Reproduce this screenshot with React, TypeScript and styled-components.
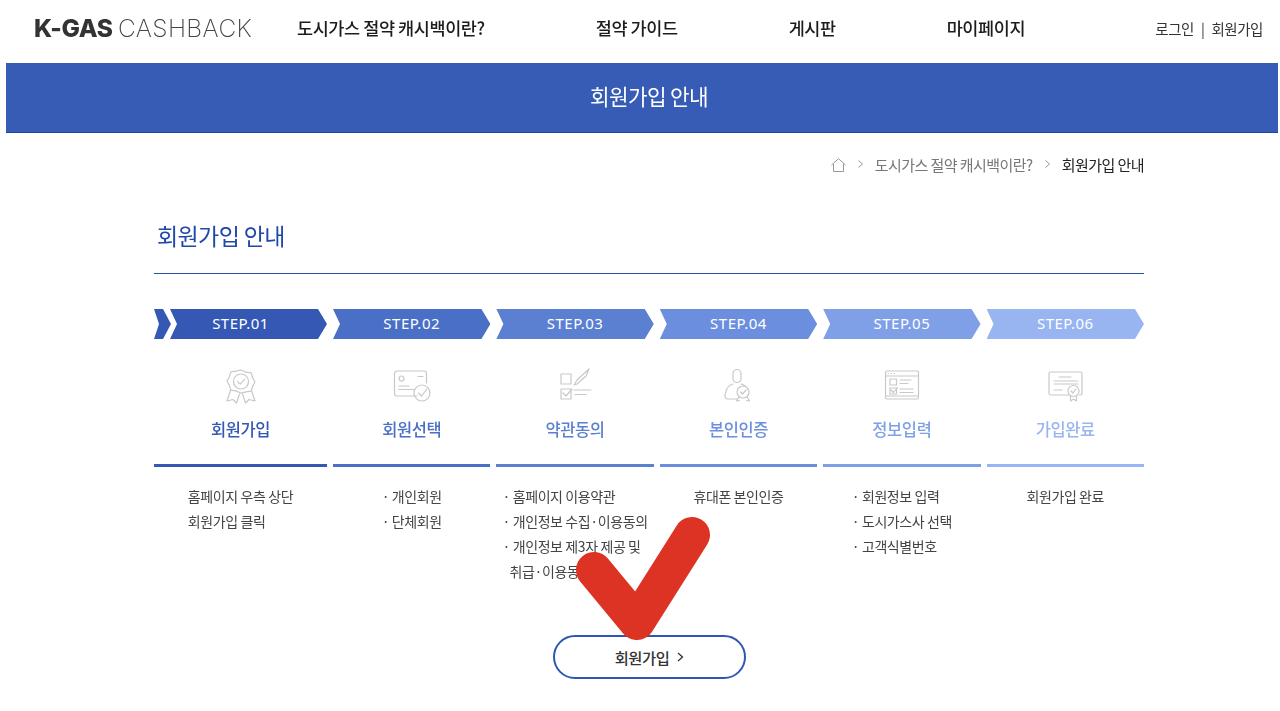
import React from "react";
import styled, { createGlobalStyle } from "styled-components";

const GlobalStyle = createGlobalStyle`
  html, body {
    margin: 0;
    padding: 0;
    background: #fff;
    font-family: "Noto Sans CJK KR", "Noto Sans", sans-serif;
  }
  * { box-sizing: border-box; }
`;

const Page = styled.div`
  position: relative;
  width: 1280px;
  height: 711px;
  overflow: hidden;
  filter: blur(0.3px);
`;

const Header = styled.header`
  display: flex;
  align-items: center;
  height: 63px;
  padding: 0 17px 7px 34px;
`;

const Logo = styled.div`
  width: 263px;
  flex: none;
  font-family: Inter, "Liberation Sans", sans-serif;
  font-size: 24.5px;
  font-weight: 200;
  letter-spacing: 0.4px;
  word-spacing: -2px;
  color: #444;
  white-space: nowrap;

  b {
    font-weight: 800;
    color: #333;
    letter-spacing: -0.3px;
  }
`;

const Nav = styled.nav`
  display: flex;
  gap: 111px;
  margin-bottom: 2px;
  font-size: 17.5px;
  font-weight: 500;
  letter-spacing: -0.42px;
  color: #1c1c1c;
  white-space: nowrap;
`;

const UserLinks = styled.div`
  display: flex;
  gap: 7px;
  margin-left: auto;
  font-size: 14.5px;
  letter-spacing: -0.45px;
  color: #333;
  white-space: nowrap;
`;

const Banner = styled.div`
  display: flex;
  align-items: center;
  justify-content: center;
  height: 70px;
  margin: 0 2px 0 6px;
  padding: 0 0 4px 14px;
  background: #375cb6;
  border-bottom: 1px solid #1d47a5;
  color: #fff;
  font-size: 21.3px;
  letter-spacing: -0.6px;
`;

const Content = styled.main`
  width: 990px;
  margin-left: 154px;
`;

const Breadcrumb = styled.div`
  display: flex;
  align-items: center;
  justify-content: flex-end;
  gap: 12px;
  height: 22px;
  margin-top: 20px;
  font-size: 15px;
  letter-spacing: -0.55px;
  color: #777;
`;

const CrumbCurrent = styled.span`
  color: #222;
`;

const CrumbSep = styled.svg`
  width: 5px;
  height: 8px;
  fill: none;
  stroke: #999;
  stroke-width: 1;
`;

const HomeIcon = styled.svg`
  width: 15px;
  height: 14px;
  margin-top: 2px;
  fill: none;
  stroke: #999;
  stroke-width: 1;
`;

const PageTitle = styled.h2`
  margin: 0;
  padding: 43px 0 0 3px;
  height: 99px;
  border-bottom: 1px solid #2a4fa8;
  color: #2048a8;
  font-size: 23px;
  font-weight: 400;
  line-height: 34px;
  letter-spacing: -0.6px;
`;

const Steps = styled.div`
  display: grid;
  grid-template-columns: 173px repeat(5, 157.4px);
  column-gap: 6px;
  margin-top: 35px;
`;

const StepColumn = styled.section`
  display: flex;
  flex-direction: column;
  align-items: stretch;
`;

const ArrowRow = styled.div`
  display: flex;
  height: 30px;
`;

const LeadChevron = styled.div`
  flex: none;
  width: 17px;
  margin-right: -1px;
  background: #3558b5;
  clip-path: polygon(0 0, 9px 0, 17px 50%, 9px 100%, 0 100%, 5px 50%);
`;

const Arrow = styled.div<{ $color: string; $lead?: boolean }>`
  flex: 1;
  display: flex;
  align-items: center;
  justify-content: center;
  padding: 0 ${({ $lead }) => ($lead ? "16px" : "0")} 3px 0;
  background: ${({ $color }) => $color};
  clip-path: polygon(0 0, calc(100% - 9px) 0, 100% 50%, calc(100% - 9px) 100%, 0 100%, 7px 50%);
  color: #fff;
  font-family: "Noto Sans", sans-serif;
  font-size: 15px;
  font-weight: 400;
  letter-spacing: 0.5px;
`;

const IconWrap = styled.div`
  display: flex;
  justify-content: center;
  align-items: center;
  height: 34px;
  margin-top: 30px;
`;

const StepSvg = styled.svg`
  width: 40px;
  height: 36px;
  fill: none;
  stroke: #c8c8c8;
  stroke-width: 1.2;
  stroke-linecap: round;
  stroke-linejoin: round;
`;

const StepName = styled.h3<{ $color: string }>`
  margin: 14px 0 0;
  height: 24px;
  text-align: center;
  color: ${({ $color }) => $color};
  font-size: 16.5px;
  font-weight: 500;
  line-height: 24px;
  letter-spacing: -0.4px;
`;

const StepRule = styled.div<{ $color: string }>`
  height: 3px;
  margin-top: 23px;
  background: ${({ $color }) => $color};
`;

const DescList = styled.ul`
  align-self: center;
  margin: 17px 0 0;
  padding: 0;
  list-style: none;
  font-size: 14px;
  line-height: 25px;
  letter-spacing: -0.4px;
  color: #444;
`;

const DescItem = styled.li`
  white-space: nowrap;
`;

const DescIndent = styled.li`
  padding-left: 7px;
  white-space: nowrap;
`;

const ButtonRow = styled.div`
  position: absolute;
  left: 553px;
  top: 635px;
`;

const JoinButton = styled.button`
  display: flex;
  align-items: center;
  justify-content: center;
  gap: 8px;
  width: 193px;
  height: 44px;
  padding: 0;
  background: #fff;
  border: 2px solid #2f55b5;
  border-radius: 22px;
  color: #333;
  font-family: inherit;
  font-size: 15.3px;
  font-weight: 500;
  letter-spacing: -0.4px;
`;

const ButtonChevron = styled.svg`
  width: 7px;
  height: 10px;
  fill: none;
  stroke: #333;
  stroke-width: 1.3;
`;

const CheckMark = styled.svg`
  position: absolute;
  left: 560px;
  top: 500px;
  width: 170px;
  height: 150px;
  fill: none;
  stroke: #dd3324;
  stroke-width: 36;
  stroke-linecap: round;
  stroke-linejoin: round;
`;

const Icon: React.FC<{ name: string }> = ({ name }) => {
  switch (name) {
    case "award":
      return (
        <StepSvg viewBox="0 0 40 36">
          <path d="M20 2l5 2.2 5.2.6 1.4 5 2.4 4.2-2.4 4.4-1.4 4.8-5.2.7L20 25.2l-5-2.3-5.2-.7-1.4-4.8L6 13l2.4-4.2 1.4-5 5.2-.6z" />
          <circle cx="20" cy="13.5" r="7.5" />
          <path d="M16.5 13.5l2.7 2.7 4.5-5" />
          <path d="M9.5 22.500L6 33l6-1.500L15.500 35l3-9M30.500 22.500L34 33l-6-1.500L24.500 35l-3-9" />
        </StepSvg>
      );
    case "card":
      return (
        <StepSvg viewBox="0 0 40 36">
          <path d="M25 28H5a2.500 2.500 0 0 1-2.500-2.500V5.500A2.500 2.500 0 0 1 5 3h27a2.500 2.500 0 0 1 2.500 2.500V15" />
          <circle cx="9.5" cy="10.5" r="2.5" />
          <path d="M26 8.500h5M7 18h10M7 21.500h15" />
          <circle cx="30" cy="25" r="8" />
          <path d="M26.500 25l3 3 5.500-7" />
        </StepSvg>
      );
    case "agree":
      return (
        <StepSvg viewBox="0 0 40 36">
          <rect x="6" y="6" width="10" height="10" />
          <rect x="6" y="21" width="10" height="10" />
          <path d="M8 25l3 3 6-7" />
          <path d="M19 17l3-5 12-11-3 7-9 8zM19 22h17M20 26.500h11" />
        </StepSvg>
      );
    case "person":
      return (
        <StepSvg viewBox="0 0 40 36">
          <rect x="15" y="1.5" width="8" height="13" rx="4" />
          <path d="M15 16c-5 1-7 5-8 11-.3 3 1 4 3 4h9" />
          <path d="M23 16c1.500.3 3 1 4 2" />
          <circle cx="25" cy="24" r="6" />
          <path d="M22.500 24l2 2 3.500-4" />
          <path d="M21 29l-2.500 4 3-.5M29 29l2.500 4-3-.5" />
        </StepSvg>
      );
    case "form":
      return (
        <StepSvg viewBox="0 0 40 36">
          <rect x="3.5" y="3" width="33" height="28" rx="1.5" />
          <path d="M3.500 8h33M3.500 28h33M6 5.500h.5M9 5.500h.5M12 5.500h.5" />
          <rect x="8" y="11" width="6.5" height="6" />
          <rect x="8" y="20" width="6.5" height="6" />
          <path d="M9 22l2.500 2.500 4-5M18 12h11M18 15.500h8M18 21h13M18 24.500h13" />
        </StepSvg>
      );
    default:
      return (
        <StepSvg viewBox="0 0 40 36">
          <path d="M24 27H5.500A1.500 1.500 0 0 1 4 25.500v-20A1.500 1.500 0 0 1 5.500 4h30A1.500 1.500 0 0 1 37 5.500v20a1.500 1.500 0 0 1-1.500 1.500H34" />
          <path d="M14 9h12M9 13h24M9 16h24M9 22h8" />
          <circle cx="28.5" cy="23" r="5.5" />
          <path d="M26 23l2 2 3-4M25.500 28v5l3-2 3 2v-5" />
        </StepSvg>
      );
  }
};

const steps = [
  { no: "01", name: "회원가입", icon: "award", color: "#3558b5", items: ["홈페이지 우측 상단", "회원가입 클릭"] },
  { no: "02", name: "회원선택", icon: "card", color: "#4a6fc6", items: ["· 개인회원", "· 단체회원"] },
  {
    no: "03",
    name: "약관동의",
    icon: "agree",
    color: "#5b80d2",
    items: ["· 홈페이지 이용약관", "· 개인정보 수집·이용동의", "· 개인정보 제3자 제공 및", "취급·이용동의"],
  },
  { no: "04", name: "본인인증", icon: "person", color: "#6b8fde", items: ["휴대폰 본인인증"] },
  { no: "05", name: "정보입력", icon: "form", color: "#7fa0e6", items: ["· 회원정보 입력", "· 도시가스사 선택", "· 고객식별번호"] },
  { no: "06", name: "가입완료", icon: "cert", color: "#98b4f1", items: ["회원가입 완료"] },
];

const App: React.FC = () => {
  return (
    <Page>
      <GlobalStyle />
      <Header>
        <Logo>
          <b>K-GAS</b> CASHBACK
        </Logo>
        <Nav>
          <span>도시가스 절약 캐시백이란?</span>
          <span>절약 가이드</span>
          <span>게시판</span>
          <span>마이페이지</span>
        </Nav>
        <UserLinks>
          <span>로그인</span>
          <span>|</span>
          <span>회원가입</span>
        </UserLinks>
      </Header>
      <Banner>회원가입 안내</Banner>
      <Content>
        <Breadcrumb>
          <HomeIcon viewBox="0 0 15 14">
            <path d="M.5 7L7.500.7 14.500 7M2.500 6v7.500h10V6" />
          </HomeIcon>
          <CrumbSep viewBox="0 0 5 8">
            <path d="M.5.5l4 3.500-4 3.500" />
          </CrumbSep>
          <span>도시가스 절약 캐시백이란?</span>
          <CrumbSep viewBox="0 0 5 8">
            <path d="M.5.5l4 3.500-4 3.500" />
          </CrumbSep>
          <CrumbCurrent>회원가입 안내</CrumbCurrent>
        </Breadcrumb>
        <PageTitle>회원가입 안내</PageTitle>
        <Steps>
          {steps.map((step, i) => (
            <StepColumn key={step.no}>
              <ArrowRow>
                {i === 0 && <LeadChevron />}
                <Arrow $color={step.color} $lead={i === 0}>
                  STEP.{step.no}
                </Arrow>
              </ArrowRow>
              <IconWrap>
                <Icon name={step.icon} />
              </IconWrap>
              <StepName $color={step.color}>{step.name}</StepName>
              <StepRule $color={step.color} />
              <DescList>
                {step.items.map((item) =>
                  item.startsWith("취급") ? (
                    <DescIndent key={item}>{item}</DescIndent>
                  ) : (
                    <DescItem key={item}>{item}</DescItem>
                  )
                )}
              </DescList>
            </StepColumn>
          ))}
        </Steps>
      </Content>
      <ButtonRow>
        <JoinButton>
          회원가입
          <ButtonChevron viewBox="0 0 7 10">
            <path d="M1 1l4.500 4L1 9" />
          </ButtonChevron>
        </JoinButton>
      </ButtonRow>
      <CheckMark viewBox="0 0 170 150">
        <path d="M34 70L77 122 132 35" />
      </CheckMark>
    </Page>
  );
};

export default App;
